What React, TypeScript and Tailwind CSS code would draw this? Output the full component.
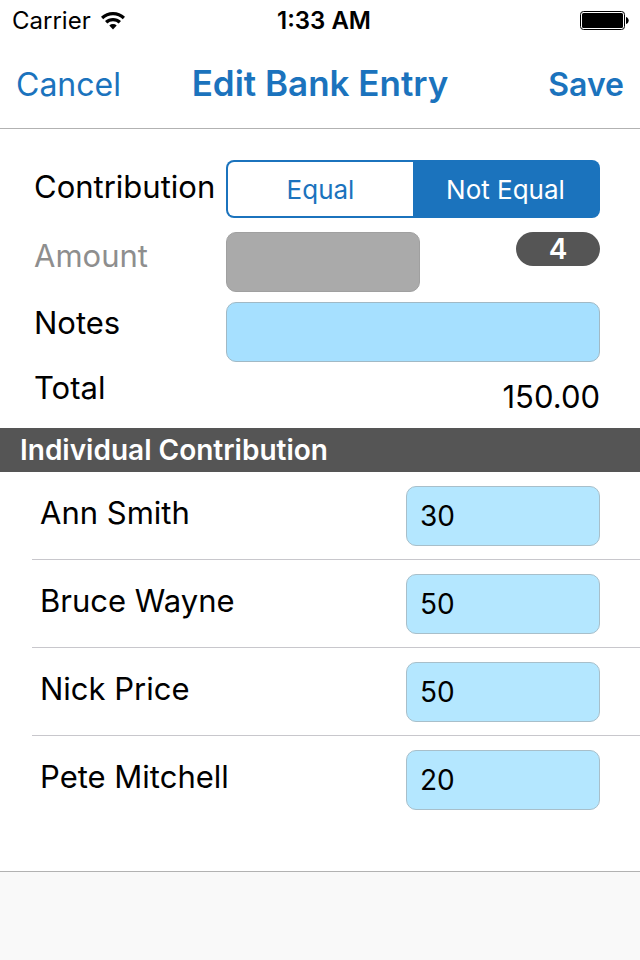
import { useState } from 'react'

type Member = {
    id: string
    name: string
    amount: string
}

const initialMembers: Member[] = [
    { id: 'ann', name: 'Ann Smith', amount: '30' },
    { id: 'bruce', name: 'Bruce Wayne', amount: '50' },
    { id: 'nick', name: 'Nick Price', amount: '50' },
    { id: 'pete', name: 'Pete Mitchell', amount: '20' },
]

const StatusBar = () => {
    return (
        <div className="grid h-[41px] grid-cols-3 items-center pl-3 pr-1 text-2xl">
            <div className="flex items-center gap-[10px]">
                <span>Carrier</span>
                <svg width="24" height="18" viewBox="0 0 24 18" aria-hidden="true">
                    <path d="M0 4.8a17.4 17.4 0 0 1 24 0l-2.2 2.4a14 14 0 0 0-19.6 0z" />
                    <path d="M4 9.1a11.6 11.6 0 0 1 16 0l-2.3 2.4a8.2 8.2 0 0 0-11.4 0z" />
                    <path d="M8.3 13.5a5.5 5.5 0 0 1 7.4 0L12 17.5z" />
                </svg>
            </div>
            <span className="text-center font-semibold">1:33 AM</span>
            <svg className="mr-[7px] justify-self-end" width="49" height="19" viewBox="0 0 49 19" aria-hidden="true">
                <rect x="0.5" y="0.5" width="44" height="18" rx="3" fill="none" stroke="#000" />
                <rect x="2" y="2" width="41" height="15" rx="1.5" />
                <path d="M46 6c3.6 1 3.6 6 0 7z" />
            </svg>
        </div>
    )
}

const NavBar = () => {
    return (
        <header className="border-b border-[#b2b2b2] bg-white">
            <StatusBar />
            <nav className="grid h-[87px] grid-cols-[1fr_auto_1fr] items-baseline px-4 pt-4 text-[32px] text-[#1b73bd]">
                <button type="button" className="justify-self-start">
                    Cancel
                </button>
                <h1 className="text-[35px] font-semibold leading-[52px]">Edit Bank Entry</h1>
                <button type="button" className="justify-self-end font-semibold">
                    Save
                </button>
            </nav>
        </header>
    )
}

const ContributionSwitch = ({ equal, onChange }: { equal: boolean; onChange: (equal: boolean) => void }) => {
    const active = 'text-white'
    const idle = 'bg-white text-[#1b73bd]'

    return (
        <div
            role="group"
            aria-labelledby="contribution-label"
            className="mb-1 grid h-[58px] grid-cols-2 rounded-lg bg-[#1b73bd] p-[2px] text-[26px]"
        >
            <button
                type="button"
                aria-pressed={equal}
                className={`rounded-l-md ${equal ? active : idle}`}
                onClick={() => onChange(true)}
            >
                Equal
            </button>
            <button
                type="button"
                aria-pressed={!equal}
                className={`rounded-r-md ${equal ? idle : active}`}
                onClick={() => onChange(false)}
            >
                Not Equal
            </button>
        </div>
    )
}

const ListOfMembers = ({ members, onEdit }: { members: Member[]; onEdit: (id: string, amount: string) => void }) => {
    return (
        <ul className="pl-8">
            {members.map((member) => (
                <li
                    key={member.id}
                    className="flex h-22 items-start justify-between border-b border-[#c8c7cc] pl-2 pr-10 pt-[14px] last:border-b-0"
                >
                    <label htmlFor={member.id} className="pt-1 text-[31px] leading-[46px]">
                        {member.name}
                    </label>
                    <input
                        id={member.id}
                        value={member.amount}
                        onChange={(e) => onEdit(member.id, e.target.value)}
                        className="h-15 w-[194px] rounded-[10px] border border-[#a8bfca] bg-[#b4e7ff] px-[13px] text-[28px]"
                    />
                </li>
            ))}
        </ul>
    )
}

const App = () => {
    const [equal, setEqual] = useState(false)
    const [members, setMembers] = useState(initialMembers)
    const total = members.reduce((sum, member) => sum + (Number(member.amount) || 0), 0)

    const editMember = (id: string, amount: string) => {
        setMembers(members.map((member) => (member.id === id ? { ...member, amount } : member)))
    }

    return (
        <div className="flex min-h-screen flex-col bg-white font-['Inter',sans-serif] text-black">
            <NavBar />
            <main className="flex-1">
                <section className="grid grid-cols-[192px_1fr] gap-y-[10px] pb-[6px] pl-[34px] pr-10 pt-[31px] text-[31px]">
                    <span id="contribution-label" className="leading-[54px]">
                        Contribution
                    </span>
                    <ContributionSwitch equal={equal} onChange={setEqual} />
                    <label htmlFor="amount" className="leading-[48px] text-[#8e8e8e]">
                        Amount
                    </label>
                    <div className="flex items-start justify-between">
                        <input
                            id="amount"
                            disabled={!equal}
                            className="h-15 w-[194px] rounded-[10px] border border-[#a0a0a0] bg-[#aaaaaa] px-[13px] text-[28px]"
                        />
                        <span className="h-[34px] w-21 rounded-full bg-[#555555] text-center text-[28px] font-semibold leading-[34px] text-white">
                            {members.length}
                        </span>
                    </div>
                    <label htmlFor="notes" className="leading-[42px]">
                        Notes
                    </label>
                    <input
                        id="notes"
                        className="h-15 w-full rounded-[10px] border border-[#a1b9c5] bg-[#a6e0ff] px-[13px] text-[28px]"
                    />
                    <span className="leading-[32px]">Total</span>
                    <output className="text-right leading-[50px]">{total.toFixed(2)}</output>
                </section>
                <h2 className="bg-[#555555] px-5 text-[28px] font-semibold leading-[44px] text-white">
                    Individual Contribution
                </h2>
                <ListOfMembers members={members} onEdit={editMember} />
            </main>
            <footer className="h-[89px] border-t border-[#b2b2b2] bg-[#f9f9f9]" />
        </div>
    )
}

export default App
